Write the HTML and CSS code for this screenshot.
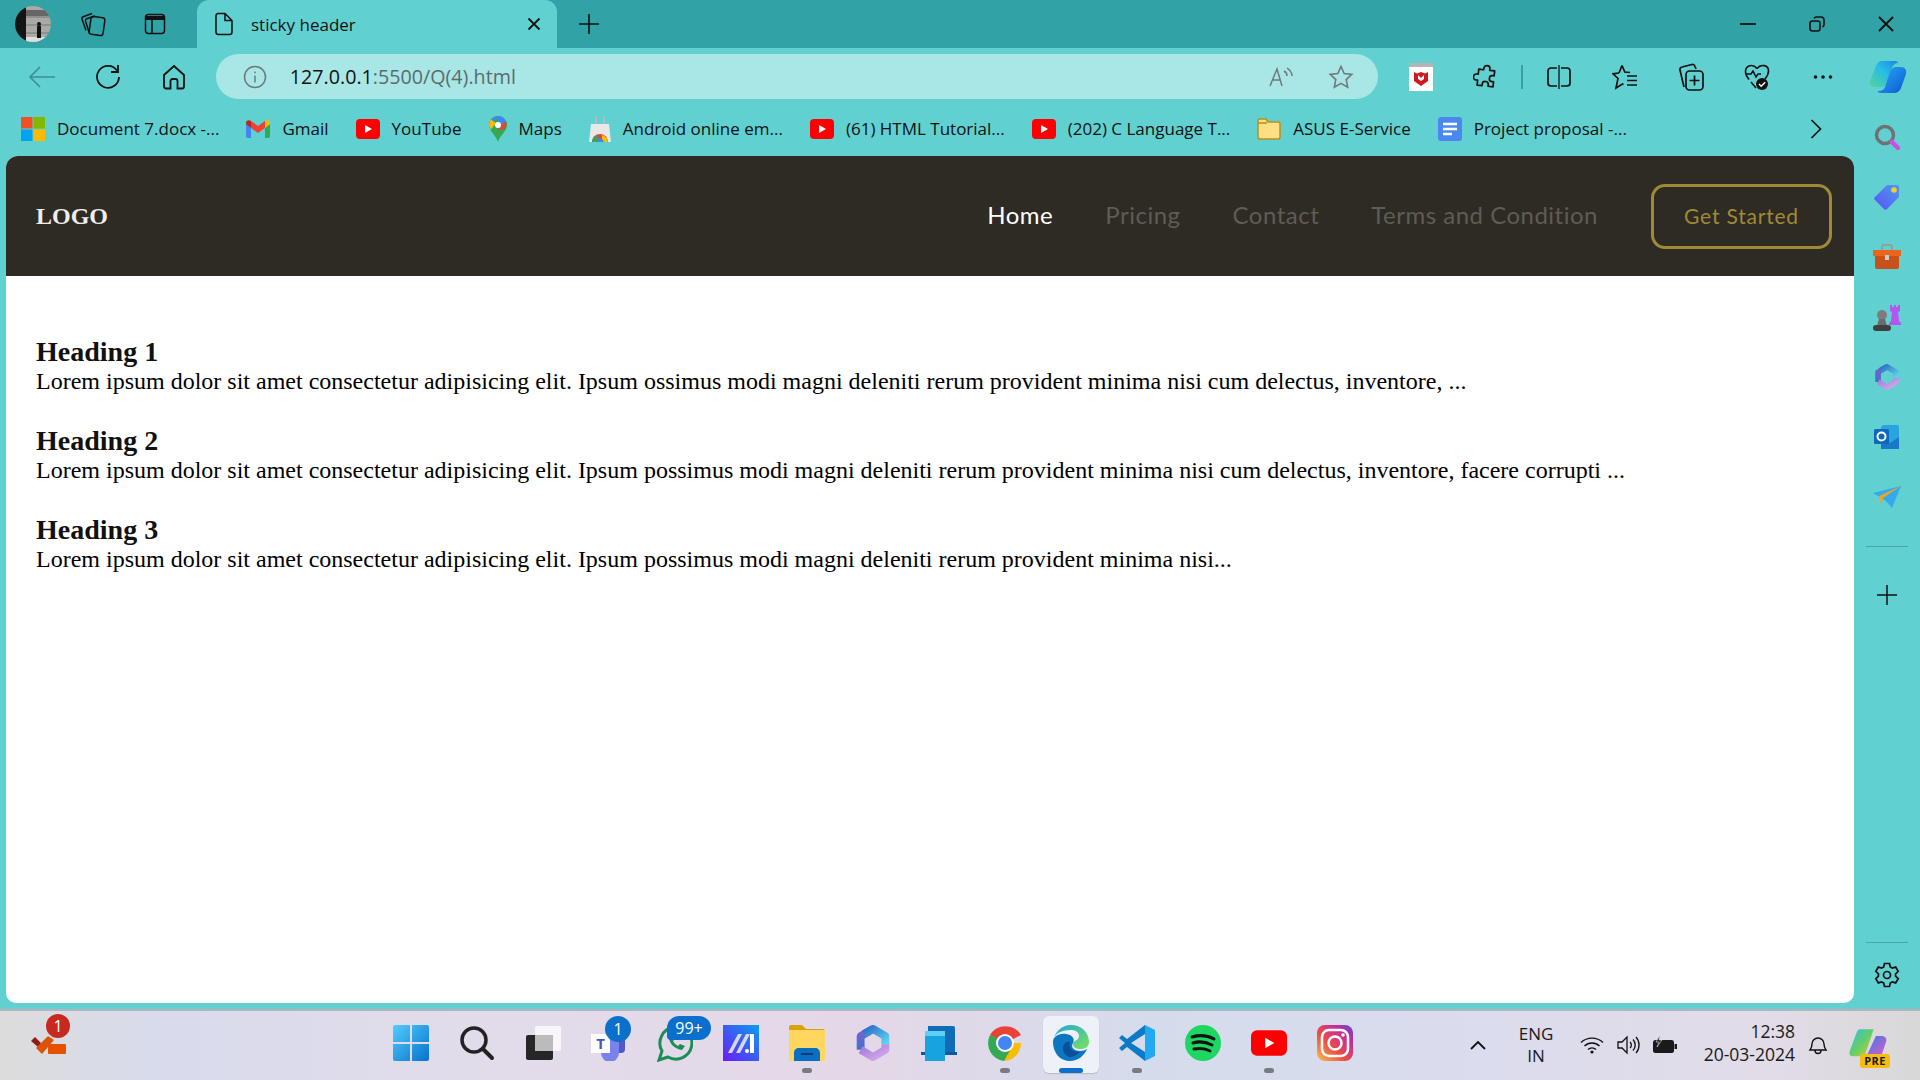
FILE: index.html
```html
<!DOCTYPE html>
<html lang="en">
<head>
	<meta charset="UTF-8">
	<title>sticky header</title>
	<link rel="stylesheet" href="styles.css">
</head>
<body>
	<svg class="defs" width="0" height="0">
		<defs>
			<symbol id="yt" viewBox="0 0 24 20"><rect width="24" height="20" rx="4" fill="#f00"/><path d="M9 6l7 4-7 4z" fill="#fff"/></symbol>
			<linearGradient id="m1" x1="0" y1="0" x2="1" y2="1"><stop offset="0" stop-color="#2a6fc8"/><stop offset="1" stop-color="#5fd6ee"/></linearGradient>
			<linearGradient id="m2" x1="0" y1="0" x2="1" y2="1"><stop offset="0" stop-color="#9a78dc"/><stop offset="1" stop-color="#d6a8e8"/></linearGradient>
			<linearGradient id="m3" x1="0" y1="0" x2="0" y2="1"><stop offset="0" stop-color="#7d5fd0"/><stop offset="1" stop-color="#3f74c8"/></linearGradient>
			<symbol id="m365" viewBox="0 0 32 32">
				<path d="M5 22V10l11-6.500" fill="none" stroke="url(#m3)" stroke-width="7" stroke-linejoin="round"/>
				<path d="M8 8l8-4.500L27 10v7" fill="none" stroke="url(#m1)" stroke-width="7" stroke-linejoin="round"/>
				<path d="M27 17v5l-11 6.500L5 22" fill="none" stroke="url(#m2)" stroke-width="7" stroke-linejoin="round"/>
			</symbol>
		</defs>
	</svg>

	<div class="tabstrip">
		<div class="slot-top">
			<svg width="36" height="36" viewBox="0 0 36 36"><defs><clipPath id="av"><circle cx="18" cy="18" r="18"/></clipPath></defs><g clip-path="url(#av)"><rect width="36" height="36" fill="#a9a9a5"/><rect width="11" height="36" fill="#141414"/><path d="M11 11h25M11 19h25M11 27h25" stroke="#777" stroke-width="1"/><rect x="11" y="4" width="25" height="6" fill="#666"/><rect x="11" y="31" width="25" height="5" fill="#ddd"/><rect x="22" y="20" width="4" height="12" fill="#111"/><circle cx="24" cy="18" r="2" fill="#111"/></g></svg>
		</div>
		<div class="slot-top">
			<svg width="26" height="26" viewBox="0 0 26 26" class="ico"><rect x="10" y="6" width="14" height="18" rx="2.500" transform="rotate(8 17 15)"/><path d="M9.500 22.500L5.500 10c-.3-1 .2-2 1.200-2.300L15 5"/><path d="M6 19.500L2 8c-.3-1 .2-2 1.200-2.300L12 2.500"/></svg>
		</div>
		<div class="slot-top slot-tabs">
			<svg width="22" height="22" viewBox="0 0 22 22" class="ico"><rect x="1.500" y="1.500" width="19" height="19" rx="3"/><path d="M1.500 5h19" stroke-width="4"/><path d="M8 5v15.500"/></svg>
		</div>
		<div class="tab">
			<svg width="20" height="24" viewBox="0 0 20 24" class="ico"><path d="M4 1.500h7l7 7V20a2.500 2.500 0 0 1-2.500 2.500h-11A2.500 2.500 0 0 1 2 20V4a2.500 2.500 0 0 1 2-2.500zM11 1.500V8.500h7"/></svg>
			<span class="tab-title">sticky header</span>
			<svg width="14" height="14" viewBox="0 0 14 14" class="ico tab-close"><path d="M1.500 1.500l11 11M12.500 1.500l-11 11" stroke-width="1.800"/></svg>
		</div>
		<div class="slot-new">
			<svg width="22" height="22" viewBox="0 0 22 22" class="ico"><path d="M11 1v20M1 11h20" stroke-width="1.600"/></svg>
		</div>
		<div class="spacer"></div>
		<div class="winbtn"><svg width="16" height="4" viewBox="0 0 16 4" class="ico"><path d="M0 2h16" stroke-width="1.800"/></svg></div>
		<div class="winbtn"><svg width="16" height="16" viewBox="0 0 16 16" class="ico"><rect x="1" y="5" width="10" height="10" rx="2.500" stroke-width="1.600"/><path d="M5 2.500C5.500 1.500 6.500 1 7.500 1H12a3 3 0 0 1 3 3v4.500c0 1-.5 2-1.500 2.500" stroke-width="1.600"/></svg></div>
		<div class="winbtn"><svg width="16" height="16" viewBox="0 0 16 16" class="ico"><path d="M1 1l14 14M15 1L1 15" stroke-width="1.800"/></svg></div>
	</div>

	<div class="toolbar">
		<div class="tool"><svg width="28" height="24" viewBox="0 0 28 24" class="ico dim"><path d="M27 12H2M12 2L2 12l10 10" stroke-width="1.600"/></svg></div>
		<div class="tool"><svg width="26" height="26" viewBox="0 0 26 26" class="ico"><path d="M22 6.500A11 11 0 1 0 24 13" stroke-width="1.800"/><path d="M23 1v7h-7" stroke-width="1.800"/></svg></div>
		<div class="tool"><svg width="24" height="26" viewBox="0 0 24 26" class="ico"><path d="M2 11L12 2l10 9v11.500a2 2 0 0 1-2 2h-4.500V17a2 2 0 0 0-2-2h-3a2 2 0 0 0-2 2v7.500H4a2 2 0 0 1-2-2z" stroke-width="1.800"/></svg></div>
		<div class="address">
			<svg width="24" height="24" viewBox="0 0 24 24" class="ico grey"><circle cx="12" cy="12" r="10.500" stroke-width="1.500"/><path d="M12 10.500v7M12 6.500v1.800" stroke-width="1.500"/></svg>
			<span class="url"><span class="url-host">127.0.0.1</span>:5500/Q(4).html</span>
			<span class="spacer"></span>
			<svg width="26" height="24" viewBox="0 0 26 24" class="ico grey"><path d="M1 21L8 4l5 17M3.500 15h8" stroke-width="1.500"/><path d="M15 6c2 1 3 3 3 5M18 3c3 2 5 5 5 8" stroke-width="1.500"/></svg>
			<svg class="addr-star ico grey" width="26" height="26" viewBox="0 0 26 26"><path d="M13 2.500l3.200 7 7.600.9-5.600 5.200 1.500 7.500-6.700-3.800-6.700 3.800 1.500-7.500-5.600-5.200 7.600-.9z" stroke-width="1.600"/></svg>
		</div>
		<div class="tool">
			<svg width="24" height="28" viewBox="0 0 24 28"><rect width="24" height="28" fill="#fff"/><rect width="24" height="4" fill="#b5b5b5"/><path d="M5 9l3 1.500L12 9l4 1.500L19 9v9l-7 5-7-5z" fill="#d0181f"/><path d="M9 12v4l3 2 3-2v-4l-3 3z" fill="#fff"/></svg>
		</div>
		<div class="tool"><svg width="26" height="26" viewBox="0 0 26 26" class="ico"><path d="M10 4.500a3 3 0 0 1 6 0V6h5v5h-1.500a3 3 0 0 0 0 6H21v5h-5v-1.500a3 3 0 0 0-6 0V22H5v-5H3.500a3 3 0 0 1 0-6H5V6h5z" stroke-width="1.700" stroke-linejoin="round" transform="rotate(6 13 13)"/></svg></div>
		<div class="tool-sep"></div>
		<div class="tool"><svg width="24" height="26" viewBox="0 0 24 26" class="ico"><path d="M12 1v24" stroke-width="1.300"/><path d="M10 4H4a3 3 0 0 0-3 3v12a3 3 0 0 0 3 3h6M14 4h6a3 3 0 0 1 3 3v12a3 3 0 0 1-3 3h-6" stroke-width="1.700"/></svg></div>
		<div class="tool"><svg width="26" height="26" viewBox="0 0 26 26" class="ico"><path d="M10 1.500l2.800 6.500 5.200.5M7 9l-6 .8 5 4.700L4 24l6.500-4 1 .5" stroke-width="1.700"/><path d="M7 9l3-7.500M15 12h10M15 16.500h10M15 21h10" stroke-width="1.700"/></svg></div>
		<div class="tool"><svg width="26" height="28" viewBox="0 0 26 28" class="ico"><path d="M6 24L2 7a2.500 2.500 0 0 1 2-3l10-2.500c1.500-.3 2.500.5 3 2L18 6" stroke-width="1.700"/><rect x="8" y="8" width="17" height="19" rx="3.500" stroke-width="1.700"/><path d="M16.500 12.500v10M11.500 17.500h10" stroke-width="1.700"/></svg></div>
		<div class="tool"><svg width="26" height="28" viewBox="0 0 26 28"><path d="M13 5.500C9 .5 1.500 2 1.500 8.500c0 3 1.500 5.500 3.500 8M21 16c2-2.500 3.500-5 3.500-8C24.500 2 17 .5 13 5.500M2 11h5l2-3 3 6 2-3h3M7 19l5 6" fill="none" stroke="#111" stroke-width="1.600"/><circle cx="18" cy="21" r="6" fill="#111"/><path d="M15 21l2.200 2.200 4-4" fill="none" stroke="#fff" stroke-width="1.400"/></svg></div>
		<div class="tool"><svg width="20" height="4" viewBox="0 0 20 4"><circle cx="2.500" cy="2" r="1.800" fill="#111"/><circle cx="10" cy="2" r="1.800" fill="#111"/><circle cx="17.500" cy="2" r="1.800" fill="#111"/></svg></div>
		<div class="tool tool-last">
			<svg width="38" height="36" viewBox="0 0 38 36"><defs><linearGradient id="cp1" x1="0" y1="0" x2="1" y2="1"><stop offset="0" stop-color="#2aa8f0"/><stop offset=".7" stop-color="#1572e0"/><stop offset="1" stop-color="#0f4fb8"/></linearGradient><linearGradient id="cp2" x1="0" y1="1" x2="1" y2="0"><stop offset="0" stop-color="#52d69a"/><stop offset=".55" stop-color="#28bce8"/><stop offset="1" stop-color="#1a86e0"/></linearGradient></defs><path d="M13 2h13c2 0 3 1 3 2-3 0-5 2-6 5l-5 15c-1 3-3 4-6 4H6c-4 0-6-3-5-6L7 7c1-3 3-5 6-5z" fill="url(#cp2)"/><path d="M27 8h5c4 0 6 3 5 7l-5 14c-1 3-4 5-7 5H12c-2 0-3-1-3.500-2 3.500 0 6.500-1 7.500-4l5-15c1-3 3-5 6-5z" fill="url(#cp1)"/></svg>
		</div>
	</div>

	<div class="main">
		<div class="left">
			<div class="bookmarks">
				<div class="bm"><svg width="24" height="24" viewBox="0 0 24 24"><rect width="11.500" height="11.500" fill="#f25022"/><rect x="12.500" width="11.500" height="11.500" fill="#7fba00"/><rect y="12.500" width="11.500" height="11.500" fill="#00a4ef"/><rect x="12.500" y="12.500" width="11.500" height="11.500" fill="#ffb900"/></svg><span>Document 7.docx -...</span></div>
				<div class="bm"><svg width="24" height="18" viewBox="0 0 24 18"><path d="M0 3v13c0 1 .8 2 2 2h3V8z" fill="#4285f4"/><path d="M24 3v13c0 1-.8 2-2 2h-3V8z" fill="#34a853"/><path d="M5 8l7 5 7-5V1l-7 5-7-5z" fill="#ea4335"/><path d="M0 3c0-3 3-3.500 5-2v7L0 4z" fill="#c5221f"/><path d="M24 3c0-3-3-3.500-5-2v7l5-4z" fill="#fbbc04"/></svg><span>Gmail</span></div>
				<div class="bm"><svg width="24" height="20"><use href="#yt"/></svg><span>YouTube</span></div>
				<div class="bm"><svg width="18" height="26" viewBox="0 0 18 26"><path d="M9 26C7 19 0 15 0 9a9 9 0 0 1 18 0c0 6-7 10-9 17z" fill="#34a853"/><path d="M2 3.500A9 9 0 0 1 9 0l-3 5z" fill="#4285f4"/><path d="M9 0a9 9 0 0 1 8 5l-5 4-3-4z" fill="#4285f4"/><path d="M0 9a9 9 0 0 1 2-5.500L7 7l-5 6.500C1 12 0 11 0 9z" fill="#fbbc04"/><path d="M17 5a9 9 0 0 1-1 8l-8 1 4-5z" fill="#ea4335" opacity=".9"/><circle cx="9" cy="9" r="3" fill="#fff"/></svg><span>Maps</span></div>
				<div class="bm"><svg width="22" height="26" viewBox="0 0 22 26"><path d="M2 8h18l2 18H0z" fill="#e8e8e8"/><path d="M7 8V3a4 4 0 0 1 8 0v5" fill="none" stroke="#bbb" stroke-width="1.500"/><path d="M3 26a8 8 0 0 1 16 0z" fill="#ea4335"/><path d="M3 26a8 8 0 0 1 5-7l3 7z" fill="#34a853"/><path d="M13 19a8 8 0 0 1 6 7h-6z" fill="#fbbc04"/><circle cx="11" cy="26" r="3.500" fill="#4285f4"/></svg><span>Android online em...</span></div>
				<div class="bm"><svg width="24" height="20"><use href="#yt"/></svg><span>(61) HTML Tutorial...</span></div>
				<div class="bm"><svg width="24" height="20"><use href="#yt"/></svg><span>(202) C Language T...</span></div>
				<div class="bm"><svg width="24" height="22" viewBox="0 0 24 22"><path d="M1 3a2 2 0 0 1 2-2h6l2 3h10a2 2 0 0 1 2 2v13a2 2 0 0 1-2 2H3a2 2 0 0 1-2-2z" fill="#ffde84" stroke="#b8911c" stroke-width="1.500"/><path d="M1 5h9" stroke="#b8911c" stroke-width="1.500"/></svg><span>ASUS E-Service</span></div>
				<div class="bm"><svg width="24" height="24" viewBox="0 0 24 24"><rect width="24" height="24" rx="3" fill="#4a88f0"/><path d="M5 7h14M5 12h14M5 17h9" stroke="#fff" stroke-width="2.500"/></svg><span>Project proposal -...</span></div>
				<div class="bm-more"><svg width="12" height="20" viewBox="0 0 12 20" class="ico"><path d="M1.500 1l9 9-9 9" stroke-width="1.700"/></svg></div>
			</div>

			<div class="page">
				<header class="site-header">
					<div class="logo">LOGO</div>
					<nav class="site-nav">
						<a class="active" href="#">Home</a>
						<a href="#">Pricing</a>
						<a href="#">Contact</a>
						<a href="#">Terms and Condition</a>
					</nav>
					<button class="cta">Get Started</button>
				</header>
				<div class="content">
					<section class="block">
						<h2>Heading 1</h2>
						<p>Lorem ipsum dolor sit amet consectetur adipisicing elit. Ipsum ossimus modi magni deleniti rerum provident minima nisi cum delectus, inventore, ...</p>
					</section>
					<section class="block">
						<h2>Heading 2</h2>
						<p>Lorem ipsum dolor sit amet consectetur adipisicing elit. Ipsum possimus modi magni deleniti rerum provident minima nisi cum delectus, inventore, facere corrupti ...</p>
					</section>
					<section class="block">
						<h2>Heading 3</h2>
						<p>Lorem ipsum dolor sit amet consectetur adipisicing elit. Ipsum possimus modi magni deleniti rerum provident minima nisi...</p>
					</section>
				</div>
			</div>
		</div>

		<aside class="sidebar">
			<div class="side-item"><svg width="26" height="26" viewBox="0 0 26 26"><circle cx="11" cy="11" r="8.500" fill="none" stroke="#6f7273" stroke-width="3.500"/><path d="M18 18l6 6" stroke="#d44be0" stroke-width="4.500" stroke-linecap="round"/></svg></div>
			<div class="side-item"><svg width="26" height="26" viewBox="0 0 26 26"><defs><linearGradient id="tag" x1="0" y1="1" x2="1" y2="0"><stop offset="0" stop-color="#5a52f2"/><stop offset="1" stop-color="#4c9bf0"/></linearGradient></defs><path d="M14 1h9a2 2 0 0 1 2 2v9a3 3 0 0 1-1 2L13 25a2 2 0 0 1-3 0L1 16a2 2 0 0 1 0-3L12 2a3 3 0 0 1 2-1z" fill="url(#tag)"/><circle cx="20" cy="6" r="2.800" fill="#f2cf2e"/></svg></div>
			<div class="side-item"><svg width="28" height="26" viewBox="0 0 28 26"><path d="M9 6V3c0-1 .8-2 2-2h6c1.200 0 2 1 2 2v3" fill="none" stroke="#9b9b9b" stroke-width="2"/><path d="M2 6h24v17c0 1-1 2-2 2H4c-1 0-2-1-2-2z" fill="#c8501b"/><rect y="6" width="28" height="6" fill="#e8641f"/><rect x="12" y="11" width="4" height="5" fill="#ccc"/></svg></div>
			<div class="side-item"><svg width="28" height="28" viewBox="0 0 28 28"><path d="M17 2h2v2h2V2h2v2h2V2h2v6l-2 1 1 9 2 2v2H16v-2l2-2 1-9-2-1z" fill="#b455ee"/><circle cx="9" cy="12" r="5" fill="#7d7d7d"/><path d="M6 16h6l2 7H4z" fill="#6b6b6b"/><rect y="22" width="18" height="6" rx="3" fill="#3f3f3f"/></svg></div>
			<div class="side-item"><svg width="26" height="26"><use href="#m365"/></svg></div>
			<div class="side-item"><svg width="26" height="26" viewBox="0 0 26 26"><path d="M9 1h14a2 2 0 0 1 2 2v21a2 2 0 0 1-2 1H7V3z" fill="#2aa3e0"/><path d="M7 15l9 4 9-6v12H7z" fill="#1a78c8"/><rect y="5" width="15" height="15" rx="1.500" fill="#0f68bd"/><circle cx="7.500" cy="12.500" r="4" fill="none" stroke="#fff" stroke-width="2"/></svg></div>
			<div class="side-item"><svg width="28" height="22" viewBox="0 0 28 22"><path d="M0 7l28-7-9 22-6-7z" fill="#34a9ee"/><path d="M6 10L28 0 10 12l-2 7z" fill="#efa420"/></svg></div>
			<div class="side-sep"></div>
			<div class="side-item"><svg width="20" height="20" viewBox="0 0 20 20" class="ico"><path d="M10 0v20M0 10h20" stroke-width="1.500"/></svg></div>
			<div class="spacer"></div>
			<div class="side-sep side-sep-low"></div>
			<div class="side-item side-gear"><svg width="26" height="26" viewBox="0 0 26 26" class="ico"><path d="M10.500 1.500h5l.8 3.500 2 1.100 3.400-1 2.500 4.300-2.600 2.400v2.400l2.600 2.400-2.500 4.300-3.400-1-2 1.100-.8 3.500h-5l-.8-3.500-2-1.100-3.400 1-2.500-4.300 2.600-2.400v-2.400L1.800 9.400l2.500-4.300 3.400 1 2-1.100z" stroke-width="1.700"/><circle cx="13" cy="13" r="3.500" stroke-width="1.700"/></svg></div>
		</aside>
	</div>

	<footer class="taskbar">
		<div class="task-left">
			<svg width="40" height="40" viewBox="0 0 40 40"><path d="M1 19l4-4 6 6-3 4z" fill="#8f1c12"/><path d="M6 26l12-12 6 4-12 14z" fill="#dd5209"/><rect x="18" y="22" width="18" height="10" rx="1" fill="#e55300"/></svg>
			<span class="badge badge-red">1</span>
		</div>
		<div class="apps">
			<div class="app"><svg width="36" height="36" viewBox="0 0 36 36"><defs><linearGradient id="win" x1="0" y1="0" x2="1" y2="1"><stop offset="0" stop-color="#52cdfb"/><stop offset="1" stop-color="#0672cd"/></linearGradient></defs><path d="M0 2a2 2 0 0 1 2-2h15v17H0zM19 0h15a2 2 0 0 1 2 2v15H19zM0 19h17v17H2a2 2 0 0 1-2-2zM19 19h17v15a2 2 0 0 1-2 2H19z" fill="url(#win)"/></svg></div>
			<div class="app"><svg width="36" height="36" viewBox="0 0 36 36"><circle cx="15" cy="15" r="12" fill="none" stroke="#222" stroke-width="3.500"/><path d="M24 24l9 9" stroke="#222" stroke-width="4" stroke-linecap="round"/></svg></div>
			<div class="app"><svg width="36" height="36" viewBox="0 0 36 36"><rect x="1" y="10" width="27" height="25" rx="2" fill="#262626"/><rect x="10" y="1" width="26" height="25" rx="2" fill="#fff" opacity=".75"/><rect x="10" y="10" width="18" height="16" fill="#bbb"/></svg></div>
			<div class="app"><svg width="36" height="36" viewBox="0 0 36 36"><rect x="14" y="8" width="20" height="20" rx="4" fill="#5059c9"/><circle cx="25" cy="5" r="5" fill="#7b83eb"/><path d="M10 11h18v17a9 9 0 0 1-18 0z" fill="#7b83eb"/><rect y="9" width="19" height="19" fill="#fff"/><text x="9.500" y="24" class="teams-t">T</text></svg><span class="badge badge-blue">1</span></div>
			<div class="app"><svg width="36" height="38" viewBox="0 0 36 38"><path d="M2 36l3-9a16 16 0 1 1 6 6z" fill="none" stroke="#1d8d56" stroke-width="3"/><path d="M12 13c0 7 6 12 13 13l3-4-5-2-2 2c-2-1-4-3-5-5l2-2-2-5z" fill="#1d8d56"/></svg><span class="badge badge-wide">99+</span></div>
			<div class="app"><svg width="36" height="36" viewBox="0 0 36 36"><defs><linearGradient id="ma" x1="0" y1="1" x2="1" y2="0"><stop offset="0" stop-color="#6a1cf5"/><stop offset="1" stop-color="#0b9df0"/></linearGradient></defs><rect width="36" height="36" fill="url(#ma)"/><path d="M5 28L15 9h4L9 28zM13 28L23 9h4L17 28z" fill="#d6d9f5"/><path d="M27 9h4v19h-4z" fill="#fff"/><circle cx="24" cy="26" r="2" fill="#fff"/></svg></div>
			<div class="app running"><svg width="36" height="36" viewBox="0 0 36 36"><path d="M0 2a2 2 0 0 1 2-2h11l4 4h17a2 2 0 0 1 2 2v6H0z" fill="#d9a20a"/><rect y="5" width="36" height="31" fill="#ffd75e"/><path d="M5 36a3 3 0 0 1 0-1V28c0-3 2-5 5-5h16c3 0 5 2 5 5v8z" fill="#0a6fc2"/><rect x="12" y="28" width="12" height="2" fill="#0b3b74"/></svg></div>
			<div class="app"><svg width="36" height="36"><use href="#m365"/></svg></div>
			<div class="app"><svg width="36" height="36" viewBox="0 0 36 36"><path d="M7 1h25a2 2 0 0 1 2 2v24H7z" fill="#0f6db8"/><rect x="0" y="27" width="36" height="3" fill="#0b5a9e"/><rect x="4" y="6" width="20" height="30" fill="#16a3e0"/><rect x="4" y="6" width="20" height="5" fill="#62cdf2"/></svg></div>
			<div class="app running"><svg width="36" height="36" viewBox="0 0 36 36"><path d="M18 18L3 10A18 18 0 0 1 34 10z" fill="#ea4335"/><path d="M18 18h16a18 18 0 0 1-17 18z" fill="#fbbc04"/><path d="M3 10a18 18 0 0 0 14 26l9-16z" fill="#34a853"/><circle cx="18" cy="18" r="9" fill="#fff"/><circle cx="18" cy="18" r="7" fill="#4285f4"/></svg></div>
			<div class="app app-active"><svg width="36" height="36" viewBox="0 0 36 36"><defs><linearGradient id="edge" x1="0" y1="0" x2="1" y2="1"><stop offset="0" stop-color="#1fa6df"/><stop offset="1" stop-color="#7be25a"/></linearGradient></defs><path d="M18 0c10 0 18 7 18 17 0 5-4 7-8 7-5 0-8-2-8-5 0-4 6-3 6-8C26 7 22 5 18 5 8 5 0 9 0 17 1 7 9 0 18 0z" fill="url(#edge)"/><path d="M0 17c0-6 7-9 13-8 7 1 9 5 7 9-3 5 2 8 7 8 3 0 5-1 7-2-3 7-9 12-17 12C7 36 0 28 0 17z" fill="#0c76c2"/><path d="M10 24c0-5 3-8 7-7-2 5 2 10 10 10-3 3-7 5-11 5-4-2-6-5-6-8z" fill="#0b4f96"/></svg></div>
			<div class="app running"><svg width="36" height="36" viewBox="0 0 36 36"><path d="M26 0l10 5v26l-10 5V0z" fill="#23a9f2"/><path d="M26 0v9L12 18l14 9v9L8 22l-5 4-3-3 6-5-6-5 3-3 5 4z" fill="#0b7ac9"/></svg></div>
			<div class="app"><svg width="36" height="36" viewBox="0 0 36 36"><circle cx="18" cy="18" r="18" fill="#1ed760"/><path d="M7 12c7-2 15-2 22 2M8 18c6-2 13-1 19 2M9 24c5-1 11-1 16 2" fill="none" stroke="#111" stroke-width="3" stroke-linecap="round"/></svg></div>
			<div class="app running"><svg width="36" height="26" viewBox="0 0 24 17"><rect width="24" height="17" rx="4" fill="#f00"/><path d="M9.500 5l6 3.500-6 3.500z" fill="#fff"/></svg></div>
			<div class="app"><svg width="36" height="36" viewBox="0 0 36 36"><defs><linearGradient id="ig" x1="0" y1="1" x2="1" y2="0"><stop offset="0" stop-color="#fdc04c"/><stop offset=".4" stop-color="#ee4b45"/><stop offset=".75" stop-color="#c42c9e"/><stop offset="1" stop-color="#5c4ad0"/></linearGradient></defs><rect width="36" height="36" rx="8" fill="url(#ig)"/><rect x="5" y="5" width="26" height="26" rx="7" fill="none" stroke="#fff" stroke-width="2.500"/><circle cx="18" cy="18" r="6.500" fill="none" stroke="#fff" stroke-width="2.500"/><circle cx="26" cy="10" r="1.800" fill="#fff"/></svg></div>
		</div>
		<div class="tray">
			<svg class="tray-chev ico" width="16" height="10" viewBox="0 0 16 10"><path d="M1 9l7-7 7 7" stroke-width="1.800"/></svg>
			<div class="lang">ENG<br>IN</div>
			<svg class="tray-wifi" width="24" height="18" viewBox="0 0 24 18"><path d="M1 6.500a16 16 0 0 1 22 0M4.500 10a11 11 0 0 1 15 0M8 13.500a6 6 0 0 1 8 0" fill="none" stroke="#111" stroke-width="1.400"/><circle cx="12" cy="16" r="1.600" fill="#111"/></svg>
			<svg class="tray-vol ico" width="24" height="20" viewBox="0 0 24 20"><path d="M1 7v6h4l5 5V2L5 7z" stroke-width="1.300"/><path d="M13 7a4 4 0 0 1 0 6M16 4.500a8 8 0 0 1 0 11M19 2a12 12 0 0 1 0 16" stroke-width="1.300"/></svg>
			<svg class="tray-batt" width="26" height="20" viewBox="0 0 26 20"><rect x="1" y="5" width="21" height="13" rx="2.500" fill="#1a1a1a"/><rect x="22.500" y="9" width="2.500" height="5" fill="#1a1a1a"/><path d="M8 0L4 7h3l-2 5 5-7H7z" fill="#1a1a1a" stroke="#dfe0ee" stroke-width=".6"/></svg>
			<div class="clock">12:38<br>20-03-2024</div>
			<svg class="tray-bell ico" width="20" height="22" viewBox="0 0 20 22"><path d="M2 16c1.500-2 2-3 2-6a6 6 0 0 1 12 0c0 3 .5 4 2 6zM7 16.500a3 3 0 0 0 6 0" stroke-width="1.400"/></svg>
			<div class="tray-copilot">
				<svg width="40" height="34" viewBox="0 0 34 30"><defs><linearGradient id="cq" x1="0" y1="0" x2="1" y2="1"><stop offset="0" stop-color="#39b9ec"/><stop offset=".5" stop-color="#5ed06a"/><stop offset="1" stop-color="#f0c330"/></linearGradient><linearGradient id="cr" x1="0" y1="0" x2="1" y2="1"><stop offset="0" stop-color="#2d7fe8"/><stop offset="1" stop-color="#e45ac8"/></linearGradient></defs><path d="M10 1h12l-8 24H4C1 25 0 23 1 20L7 4c.7-2 1.500-3 3-3z" fill="url(#cq)"/><path d="M24 7h5c3 0 5 2 4 5l-4 12c-1 3-3 4-5 4H12l5-6z" fill="url(#cr)"/></svg>
				<span class="pre">PRE</span>
			</div>
		</div>
	</footer>
</body>
</html>
```

FILE: styles.css
```css
* {
	box-sizing: border-box;
}
html, body {
	height: 100%;
}
body {
	margin: 0;
	height: 1080px;
	overflow: hidden;
	display: flex;
	flex-direction: column;
	background-color: #61d0d1;
	font-family: "Open Sans", "Noto Sans", sans-serif;
	color: #111;
}
svg {
	display: block;
	flex: none;
}
.defs {
	position: absolute;
}
.ico {
	fill: none;
	stroke: #111;
	stroke-width: 1.5;
}
.ico.dim {
	stroke: #3d8f93;
}
.ico.grey {
	stroke: #6f7a7b;
}
.spacer {
	flex: 1;
}

/* top strip */
.tabstrip {
	height: 48px;
	display: flex;
	align-items: center;
	padding-left: 3px;
	background-color: #31a3a7;
}
.slot-top {
	width: 60px;
	display: flex;
	justify-content: center;
}
.slot-tabs {
	margin-left: 2px;
}
.tab {
	width: 360px;
	height: 48px;
	margin-left: 12px;
	padding: 0 16px 0 17px;
	display: flex;
	align-items: center;
	background-color: #61d0d1;
	border-radius: 12px 12px 0 0;
}
.tab-title {
	margin-left: 17px;
	font-size: 17px;
	flex: 1;
}
.slot-new {
	width: 64px;
	display: flex;
	justify-content: center;
}
.winbtn {
	width: 69px;
	display: flex;
	justify-content: center;
}

/* toolbar */
.toolbar {
	height: 61px;
	padding: 6px 0 10px 9px;
	display: flex;
	align-items: center;
}
.tool {
	width: 66px;
	display: flex;
	justify-content: center;
}
.tool-last {
	width: 64px;
}
.tool-sep {
	width: 2px;
	height: 24px;
	margin: 0 3px 0 2px;
	background-color: #3d9ea2;
}
.address {
	width: 1163px;
	height: 45px;
	margin: 0 10px 0 9px;
	padding: 0 24px 0 27px;
	display: flex;
	align-items: center;
	background-color: #a8e7e6;
	border-radius: 23px;
}
.url {
	margin-left: 23px;
	font-size: 19.700px;
	color: #5d6b6d;
}
.url-host {
	color: #111;
}
.addr-star {
	margin-left: 33px;
}

/* bookmarks + page */
.main {
	flex: 1;
	display: flex;
	min-height: 0;
}
.left {
	width: 1854px;
	display: flex;
	flex-direction: column;
}
.bookmarks {
	height: 47px;
	padding: 0 0 8px 21px;
	display: flex;
	align-items: center;
	gap: 27px;
}
.bm {
	display: flex;
	align-items: center;
	gap: 12px;
	font-size: 17px;
	white-space: nowrap;
}
.bm-more {
	margin-left: auto;
	margin-right: 32px;
}
.page {
	flex: 1;
	margin: 0 0 6px 6px;
	background-color: #fff;
	border-radius: 12px 12px 10px 10px;
	overflow: hidden;
	font-family: "Liberation Serif", serif;
}
.site-header {
	height: 120px;
	padding: 0 22px 0 30px;
	display: flex;
	align-items: center;
	background-color: #2e2b25;
}
.logo {
	flex: 1;
	font-size: 24px;
	font-weight: bold;
	color: #eeeeee;
}
.site-nav {
	display: flex;
	gap: 52px;
	margin-right: 53px;
	padding-bottom: 3px;
	font-family: "Lato", sans-serif;
	font-size: 24px;
	letter-spacing: .5px;
}
.site-nav a {
	color: #5f5c54;
	text-decoration: none;
}
.site-nav a.active {
	color: #fff;
}
.cta {
	width: 181px;
	height: 65px;
	padding: 0 0 2px;
	background: none;
	border: 3px solid #a08a35;
	border-radius: 14px;
	color: #a08a35;
	font-family: "Lato", sans-serif;
	font-size: 21px;
	letter-spacing: .8px;
}
.content {
	padding: 61px 30px 0;
}
.block {
	margin-bottom: 31px;
}
.block h2 {
	margin: 0;
	font-size: 28px;
	line-height: 30px;
}
.block p {
	margin: 0;
	font-size: 24px;
	line-height: 28px;
	color: #000;
}

/* right sidebar */
.sidebar {
	flex: 1;
	margin-top: -2px;
	display: flex;
	flex-direction: column;
	align-items: center;
}
.side-item {
	height: 60px;
	flex: none;
	display: flex;
	align-items: center;
	justify-content: center;
}
.side-sep {
	width: 42px;
	height: 1px;
	flex: none;
	margin: 19px 0 18px;
	background-color: #4aa5a8;
}
.side-sep-low {
	margin: 0 0 2px;
}
.side-gear {
	margin-bottom: 4px;
}

/* taskbar */
.taskbar {
	height: 71px;
	padding-top: 5px;
	display: flex;
	align-items: flex-start;
	border-top: 2px solid #b8b2bf;
	background: linear-gradient(90deg, #dcdcdc 0, #d8dbec 8%, #e2dcea 25%, #e4d8e8 45%, #d4dcec 60%, #dadcee 75%, #e2dce8 92%, #d8d8d8 100%);
}
.task-left {
	width: 378px;
	margin-top: 6px;
	padding-left: 30px;
	position: relative;
}
.apps {
	display: flex;
}
.app {
	width: 66px;
	height: 57px;
	padding-bottom: 3px;
	display: flex;
	align-items: center;
	justify-content: center;
	position: relative;
}
.running::after, .app-active::after {
	content: "";
	position: absolute;
	bottom: 0;
	left: 28px;
	width: 10px;
	height: 5px;
	border-radius: 3px;
	background-color: #7a7a85;
}
.app-active {
	width: 56px;
	margin: 0 5px;
	background-color: #eef1f7;
	border-radius: 6px;
	box-shadow: 0 1px 1px #bbb;
}
.app-active::after {
	left: 16px;
	width: 24px;
	background-color: #0a70cc;
}
.badge {
	position: absolute;
	display: flex;
	align-items: center;
	justify-content: center;
	color: #fff;
	font-size: 16px;
}
.badge-red {
	top: -8px;
	left: 46px;
	width: 24px;
	height: 24px;
	border-radius: 50%;
	background-color: #c9281e;
}
.badge-blue {
	top: 0;
	right: 11px;
	width: 26px;
	height: 26px;
	border-radius: 50%;
	background-color: #0a70cc;
}
.badge-wide {
	top: 0;
	right: -3px;
	width: 44px;
	height: 24px;
	border-radius: 12px 12px 12px 4px;
	background-color: #0a70cc;
}
.teams-t {
	font-family: "Open Sans", sans-serif;
	font-size: 15px;
	font-weight: bold;
	fill: #4b53bc;
	text-anchor: middle;
}
.tray {
	flex: 1;
	height: 57px;
	display: flex;
	align-items: center;
	padding-left: 102px;
	font-size: 17px;
	color: #1a1a1a;
}
.lang {
	width: 60px;
	margin-left: 20px;
	text-align: center;
	line-height: 22px;
}
.tray-wifi {
	margin-left: 14px;
}
.tray-vol {
	margin-left: 13px;
}
.tray-batt {
	margin-left: 11px;
}
.clock {
	width: 117px;
	margin-bottom: 3px;
	font-size: 17.500px;
	text-align: right;
	line-height: 23px;
}
.tray-bell {
	margin-left: 13px;
}
.tray-copilot {
	position: relative;
	margin-left: 20px;
}
.pre {
	position: absolute;
	right: -2px;
	bottom: -6px;
	padding: 0 4px;
	border-radius: 3px;
	background-color: #f5bd10;
	font-size: 11px;
	font-weight: bold;
	line-height: 14px;
	letter-spacing: .5px;
}
```
